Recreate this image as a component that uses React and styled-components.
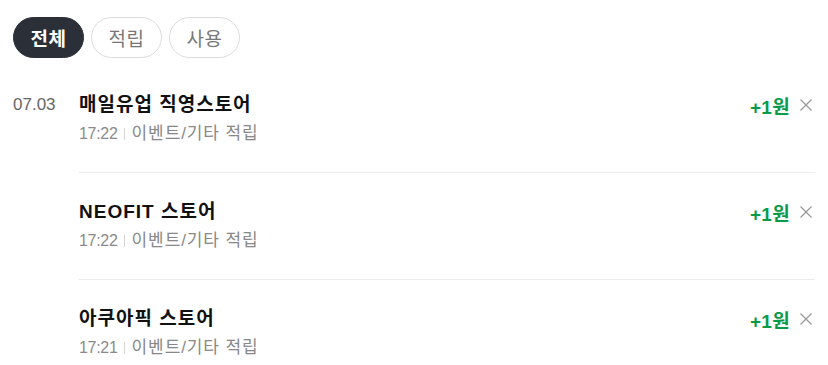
import React from 'react';
import styled, { createGlobalStyle } from 'styled-components';

const GlobalStyle = createGlobalStyle`
  body {
    margin: 0;
    background: #fff;
    font-family: 'Liberation Sans', 'Noto Sans CJK KR', sans-serif;
  }
`;

const StPage = styled.div`
  width: 828px;
  height: 365px;
  overflow: hidden;
  padding: 17px 13px 0 13px;
  box-sizing: border-box;
`;

const StTabs = styled.div`
  display: flex;
  gap: 7px;
  margin-bottom: 8px;
`;

const StTab = styled.button`
  height: 41px;
  width: 71px;
  border-radius: 21px;
  box-sizing: border-box;
  border: 1px solid ${(p) => (p.active ? '#2b3038' : '#dcdcdc')};
  background: ${(p) => (p.active ? '#2b3038' : '#fff')};
  color: ${(p) => (p.active ? '#fff' : '#777')};
  font-family: 'Liberation Sans', 'Noto Sans CJK KR', sans-serif;
  font-size: 19px;
  font-weight: ${(p) => (p.active ? 'bold' : 'normal')};
  letter-spacing: 0.5px;
  padding: 0;
  cursor: pointer;
`;

const StGroup = styled.div`
  display: flex;
`;

const StDate = styled.div`
  width: 66px;
  flex-shrink: 0;
  padding-top: 26px;
  font-size: 17px;
  line-height: 26px;
  color: #666;
`;

const StList = styled.div`
  flex: 1;
`;

const StRow = styled.div`
  display: flex;
  align-items: flex-start;
  padding: 26px 0 27px;
  border-top: ${(p) => (p.first ? 'none' : '1px solid #ececec')};
`;

const StInfo = styled.div`
  flex: 1;
`;

const StTitle = styled.div`
  font-size: 19px;
  font-weight: bold;
  line-height: 26px;
  letter-spacing: 1px;
  color: #111;
`;

const StSub = styled.div`
  margin-top: 5px;
  display: flex;
  align-items: center;
  font-size: 17px;
  line-height: 22px;
  letter-spacing: 0.9px;
  color: #888;
`;

const StTime = styled.span`
  font-size: 16px;
  color: #8a8a8a;
  letter-spacing: -0.3px;
`;

const StBar = styled.span`
  width: 1px;
  height: 12px;
  background: #d5d5d5;
  margin: 0 7px 0 6px;
`;

const StAmount = styled.div`
  display: flex;
  align-items: center;
  height: 26px;
  gap: 9px;
  font-size: 19px;
  font-weight: bold;
  letter-spacing: 0.3px;
  color: #0a9b4a;
`;

const StClose = styled.button`
  border: 0;
  background: transparent;
  padding: 0 2px 0 0;
  display: flex;
  align-items: center;
  cursor: pointer;
`;

function CloseSvg() {
  return (
    <svg width="14" height="14" viewBox="0 0 14 14" fill="none" stroke="#999" strokeWidth="1.3">
      <line x1="1.5" y1="1.5" x2="12.5" y2="12.5" />
      <line x1="12.5" y1="1.5" x2="1.5" y2="12.5" />
    </svg>
  );
}

const items = [
  { title: '매일유업 직영스토어', time: '17:22' },
  { title: 'NEOFIT 스토어', time: '17:22' },
  { title: '아쿠아픽 스토어', time: '17:21' },
];

export default function App() {
  return (
    <StPage>
      <GlobalStyle />
      <StTabs>
        <StTab active>전체</StTab>
        <StTab>적립</StTab>
        <StTab>사용</StTab>
      </StTabs>
      <StGroup>
        <StDate>07.03</StDate>
        <StList>
          {items.map((it, i) => (
            <StRow key={i} first={i === 0}>
              <StInfo>
                <StTitle>{it.title}</StTitle>
                <StSub>
                  <StTime>{it.time}</StTime>
                  <StBar />
                  이벤트/기타 적립
                </StSub>
              </StInfo>
              <StAmount>
                +1원
                <StClose>
                  <CloseSvg />
                </StClose>
              </StAmount>
            </StRow>
          ))}
        </StList>
      </StGroup>
    </StPage>
  );
}
